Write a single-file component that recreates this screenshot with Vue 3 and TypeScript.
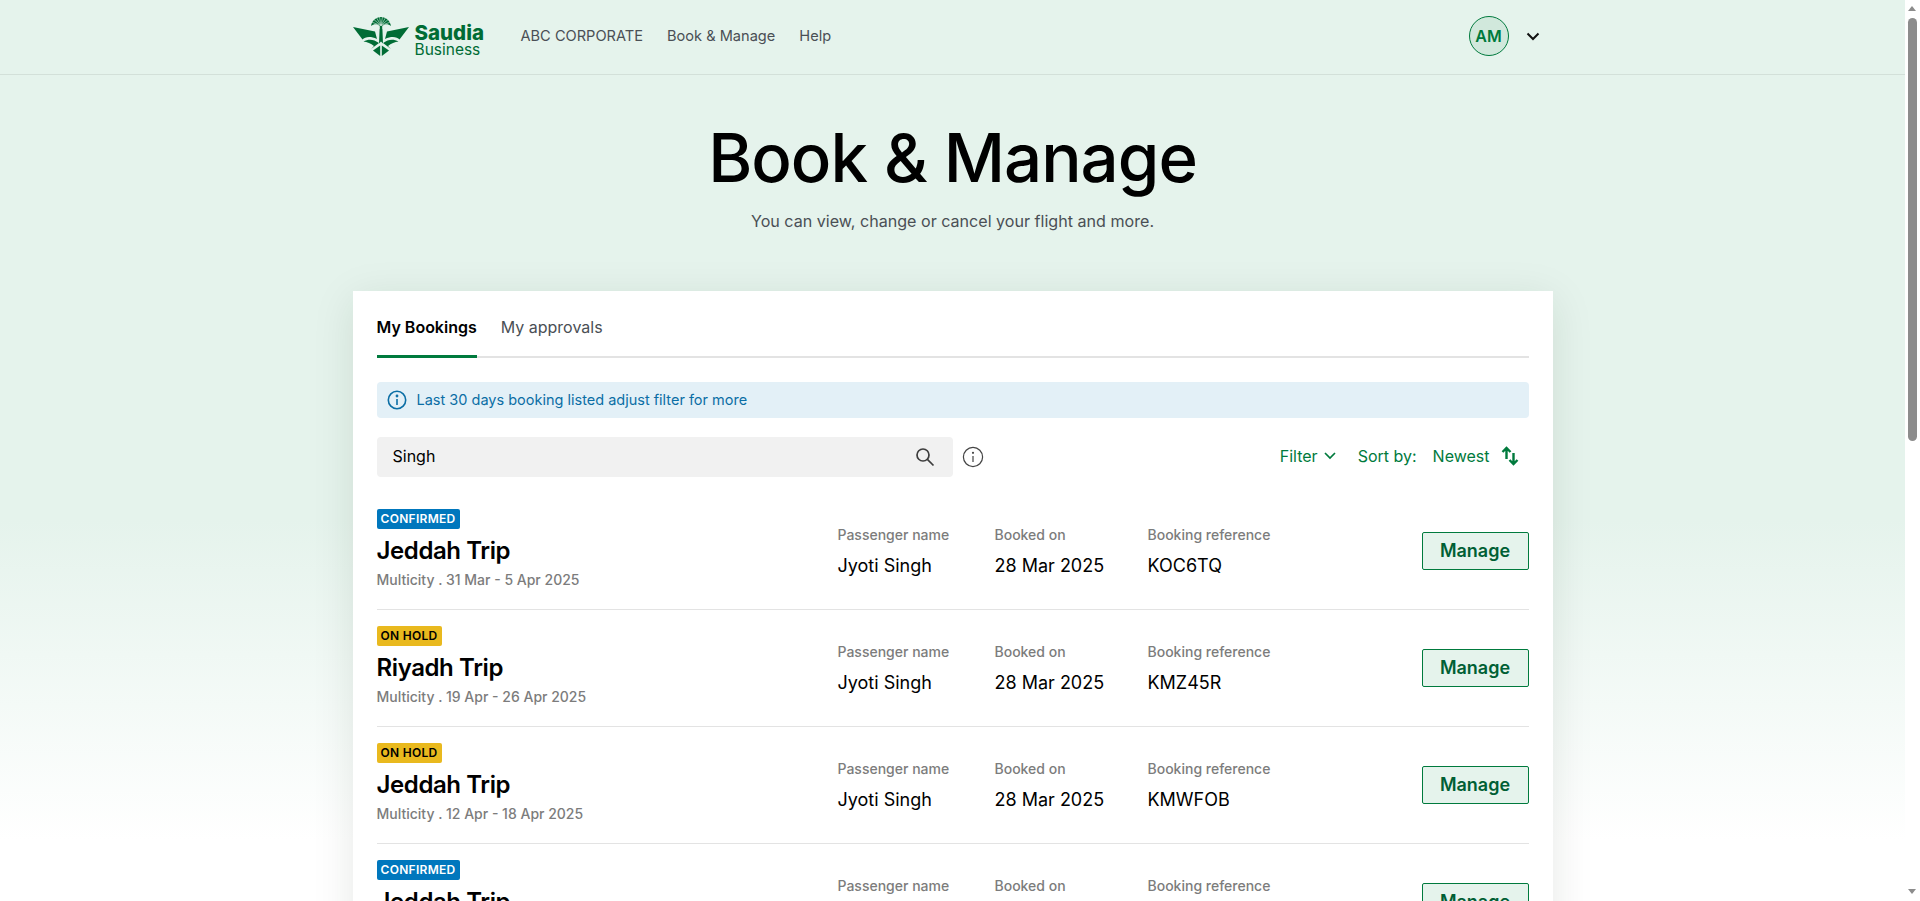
<script setup lang="ts">
interface Booking {
  status: 'CONFIRMED' | 'ON HOLD'
  title: string
  sub: string
  passenger: string
  bookedOn: string
  reference: string
}

const bookings: Booking[] = [
  { status: 'CONFIRMED', title: 'Jeddah Trip', sub: 'Multicity . 31 Mar - 5 Apr 2025', passenger: 'Jyoti Singh', bookedOn: '28 Mar 2025', reference: 'KOC6TQ' },
  { status: 'ON HOLD', title: 'Riyadh Trip', sub: 'Multicity . 19 Apr - 26 Apr 2025', passenger: 'Jyoti Singh', bookedOn: '28 Mar 2025', reference: 'KMZ45R' },
  { status: 'ON HOLD', title: 'Jeddah Trip', sub: 'Multicity . 12 Apr - 18 Apr 2025', passenger: 'Jyoti Singh', bookedOn: '28 Mar 2025', reference: 'KMWFOB' },
  { status: 'CONFIRMED', title: 'Jeddah Trip', sub: 'Multicity . 2 Apr - 8 Apr 2025', passenger: 'Jyoti Singh', bookedOn: '28 Mar 2025', reference: 'KLP92D' }
]

const fronds = [-70, -50, -30, -10, 10, 30, 50, 70]

const statusClass = (status: Booking['status']) =>
  status === 'CONFIRMED' ? 'badge-confirmed' : 'badge-hold'
</script>

<template>
  <div class="page">
    <header class="topbar">
      <div class="container topbar-inner">
        <div class="logo">
          <svg class="emblem" width="56" height="40" viewBox="0 0 56 40" fill="#006c35">
            <path d="M0 11 L22 15.5 L24 23 C18 20 12 20.5 9.5 23.5 Z" />
            <path d="M56 11 L34 15.5 L32 23 C38 20 44 20.5 46.5 23.5 Z" />
            <path d="M10.5 25.5 C16 22.5 21 23.5 26 27 L18 33 L21 30 C18 27.5 14 26 10.5 25.5 Z" />
            <path d="M45.5 25.5 C40 22.5 35 23.5 30 27 L38 33 L35 30 C38 27.5 42 26 45.5 25.5 Z" />
            <path d="M27.2 29.5 L27.2 40 L20 34.5 Z" />
            <path d="M28.8 29.5 L28.8 40 L36 34.5 Z" />
            <path d="M26.6 13 H29.4 L30 27.5 L28 25.5 L26 27.5 Z" />
            <path d="M28 1 C33 1 37 4.5 38 10 C35 7.5 32 7.5 29.2 10 L29.2 13 L26.8 13 L26.8 10 C24 7.5 21 7.5 18 10 C19 4.5 23 1 28 1 Z" />
            <path
              v-for="angle in fronds"
              :key="angle"
              d="M28 9.5 V0"
              stroke="#e5f3ec"
              stroke-width="0.5"
              :transform="`rotate(${angle} 28 9.5)`"
            />
          </svg>
          <div class="wordmark">
            <span class="wordmark-top">Saudia</span>
            <span class="wordmark-bottom">Business</span>
          </div>
        </div>
        <nav class="nav">
          <span>ABC CORPORATE</span>
          <span>Book &amp; Manage</span>
          <span>Help</span>
        </nav>
        <div class="account">
          <div class="avatar">AM</div>
          <svg width="14" height="9" viewBox="0 0 14 9" fill="none" stroke="#111" stroke-width="2">
            <path d="M1.5 1.5 L7 7 L12.5 1.5" />
          </svg>
        </div>
      </div>
    </header>

    <section class="hero">
      <h1>Book &amp; Manage</h1>
      <p>You can view, change or cancel your flight and more.</p>
    </section>

    <main class="container card">
      <div class="tabs">
        <div class="tab tab-active">My Bookings</div>
        <div class="tab">My approvals</div>
      </div>

      <div class="notice">
        <svg width="20" height="20" viewBox="0 0 20 20" fill="none" stroke="#0b6ea5" stroke-width="1.6">
          <circle cx="10" cy="10" r="8.7" />
          <path d="M10 9 V15" />
          <circle cx="10" cy="6" r="0.6" />
        </svg>
        <span>Last 30 days booking listed adjust filter for more</span>
      </div>

      <div class="toolbar">
        <div class="search">
          <span>Singh</span>
          <svg width="22" height="22" viewBox="0 0 22 22" fill="none" stroke="#3d3d3d" stroke-width="1.7">
            <circle cx="9" cy="9" r="6" />
            <path d="M13.4 13.4 L19.5 19.5" />
          </svg>
        </div>
        <svg class="search-info" width="22" height="22" viewBox="0 0 22 22" fill="none" stroke="#444" stroke-width="1.2">
          <circle cx="11" cy="11" r="9.6" />
          <path d="M11 10 V16" />
          <circle cx="11" cy="6.8" r="0.5" />
        </svg>
        <div class="controls">
          <span class="filter">
            Filter
            <svg width="12" height="8" viewBox="0 0 12 8" fill="none" stroke="#007a3d" stroke-width="1.7">
              <path d="M1 1 L6 6 L11 1" />
            </svg>
          </span>
          <span class="sort-label">Sort by:</span>
          <span>Newest</span>
          <svg class="sort-icon" width="18" height="20" viewBox="0 0 18 20" fill="none" stroke="#007a3d" stroke-width="2.4">
            <path d="M5.5 13 V2 M1.5 6 L5.5 2 L9.5 6" />
            <path d="M12.5 7 V18 M8.5 14 L12.5 18 L16.5 14" />
          </svg>
        </div>
      </div>

      <div class="rows">
        <div v-for="booking in bookings" :key="booking.reference" class="row">
          <div class="trip">
            <span class="badge" :class="statusClass(booking.status)">{{ booking.status }}</span>
            <div class="trip-title">{{ booking.title }}</div>
            <div class="trip-sub">{{ booking.sub }}</div>
          </div>
          <div class="field">
            <div class="field-label">Passenger name</div>
            <div class="field-value">{{ booking.passenger }}</div>
          </div>
          <div class="field">
            <div class="field-label">Booked on</div>
            <div class="field-value">{{ booking.bookedOn }}</div>
          </div>
          <div class="field">
            <div class="field-label">Booking reference</div>
            <div class="field-value">{{ booking.reference }}</div>
          </div>
          <button class="manage" type="button">Manage</button>
        </div>
      </div>
    </main>

    <div class="scrollbar">
      <span class="scroll-arrow scroll-up"></span>
      <span class="scroll-thumb"></span>
      <span class="scroll-arrow scroll-down"></span>
    </div>
  </div>
</template>

<style>
html,
body {
  overflow: hidden;
  height: 901px;
}

body {
  background: #fff;
}
</style>

<style scoped>
.page {
  font-family: Inter, "Noto Sans", sans-serif;
  background: linear-gradient(180deg, #e5f3ec 0, #e5f3ec 520px, #fff 840px);
  color: #000;
  height: 901px;
  overflow: hidden;
  margin-right: 15px;
}

.container {
  width: 1200px;
  margin: 0 auto;
  box-sizing: border-box;
}

.topbar {
  height: 75px;
  border-bottom: 1px solid #d3e0d9;
  box-sizing: border-box;
}

.topbar-inner {
  height: 100%;
  display: flex;
  align-items: center;
  padding-bottom: 2px;
}

.logo {
  display: flex;
  align-items: center;
  gap: 6px;
  width: 167px;
}

.wordmark {
  display: flex;
  flex-direction: column;
  color: #006c35;
  padding-top: 9px;
}

.wordmark-top {
  font-size: 20.5px;
  line-height: 19px;
  font-weight: 800;
}

.wordmark-bottom {
  font-size: 15.5px;
  line-height: 16px;
  font-weight: 400;
}

.nav {
  display: flex;
  gap: 24px;
  font-size: 14.6px;
  color: #4a4f55;
  flex: 1;
  margin-left: 1px;
}

.account {
  display: flex;
  align-items: center;
  gap: 17px;
  margin-right: 13px;
}

.avatar {
  width: 40px;
  height: 40px;
  box-sizing: border-box;
  border: 1px solid #007a3d;
  border-radius: 50%;
  background: #d1e8dc;
  color: #007a3d;
  font-size: 16px;
  font-weight: 600;
  display: flex;
  align-items: center;
  justify-content: center;
}

.hero {
  height: 216px;
  text-align: center;
  overflow: hidden;
}

.hero h1 {
  margin: 45px 0 0;
  font-size: 67.2px;
  line-height: 76px;
  font-weight: 500;
  letter-spacing: -1px;
}

.hero p {
  margin: 14px 0 0;
  font-size: 16.1px;
  line-height: 22px;
  color: #4a4f55;
}

.card {
  background: #fff;
  padding: 0 24px 24px;
  box-shadow: 0 8px 40px rgba(0, 40, 20, 0.1);
}

.tabs {
  display: flex;
  gap: 24px;
  height: 67px;
  border-bottom: 2px solid #e3e3e3;
  box-sizing: border-box;
}

.tab {
  font-size: 16px;
  line-height: 22px;
  padding-top: 25px;
  color: #4a4f55;
  height: 67px;
  box-sizing: border-box;
}

.tab-active {
  font-weight: 600;
  color: #000;
  border-bottom: 3px solid #007a3d;
}

.notice {
  margin-top: 24px;
  height: 36px;
  background: #e3f0f7;
  border-radius: 4px;
  display: flex;
  align-items: center;
  gap: 10px;
  padding: 0 10px;
  font-size: 14.5px;
  color: #0b6ea5;
}

.notice span {
  margin-bottom: 2px;
}

.toolbar {
  margin-top: 19px;
  display: flex;
  align-items: center;
  height: 40px;
}

.search {
  width: 576px;
  height: 40px;
  background: #f1f1f1;
  border-radius: 4px;
  display: flex;
  align-items: center;
  justify-content: space-between;
  padding: 0 17px 0 16px;
  box-sizing: border-box;
  font-size: 16px;
}

.search span {
  margin-bottom: 2px;
}

.search-info {
  margin-left: 9px;
}

.controls {
  margin-left: auto;
  margin-right: 10px;
  display: flex;
  align-items: center;
  gap: 16px;
  font-size: 16px;
  color: #007a3d;
  padding-bottom: 2px;
}

.filter {
  display: inline-flex;
  align-items: center;
  gap: 6px;
  margin-right: 6px;
}

.sort-icon {
  margin-left: -5px;
}

.rows {
  margin-top: 16px;
}

.row {
  display: grid;
  grid-template-columns: 461px 157px 153px 1fr auto;
  align-items: center;
  height: 117px;
  border-bottom: 1px solid #e3e3e3;
  box-sizing: border-box;
}

.trip {
  display: flex;
  flex-direction: column;
  align-items: flex-start;
  padding-bottom: 3px;
}

.badge {
  height: 20px;
  line-height: 20px;
  padding: 0 4px;
  border-radius: 2px;
  font-size: 12px;
  font-weight: 600;
  letter-spacing: 0.3px;
}

.badge-confirmed {
  background: #0077bd;
  color: #fff;
}

.badge-hold {
  background: #e9b91e;
  color: #000;
}

.trip-title {
  font-size: 24px;
  line-height: 32px;
  font-weight: 600;
  letter-spacing: -0.4px;
  margin-top: 6px;
}

.trip-sub {
  font-size: 14px;
  line-height: 20px;
  font-weight: 500;
  color: #7c7c7c;
  margin-top: 3px;
}

.field-label {
  font-size: 14px;
  line-height: 20px;
  font-weight: 500;
  color: #7c7c7c;
}

.field-value {
  font-size: 18px;
  line-height: 24px;
  margin-top: 9px;
}

.manage {
  width: 107px;
  height: 38px;
  padding: 0 0 2px;
  border: 1px solid #007a3d;
  border-radius: 2px;
  background: #e5f3ec;
  color: #005f35;
  font-family: inherit;
  font-size: 18px;
  font-weight: 600;
}

/* the page's own scrollbar, painted because the test browser hides real ones */
.scrollbar {
  position: fixed;
  top: 0;
  right: 0;
  bottom: 0;
  width: 15px;
  background: #fff;
}

.scroll-thumb {
  position: absolute;
  top: 18px;
  left: 3px;
  width: 9px;
  height: 423px;
  border-radius: 5px;
  background: #8c8c8c;
}

.scroll-arrow {
  position: absolute;
  left: 3px;
  width: 0;
  height: 0;
  border-left: 4.5px solid transparent;
  border-right: 4.5px solid transparent;
}

.scroll-up {
  top: 6px;
  border-bottom: 5px solid #8c8c8c;
}

.scroll-down {
  bottom: 7px;
  border-top: 5px solid #8c8c8c;
}
</style>
